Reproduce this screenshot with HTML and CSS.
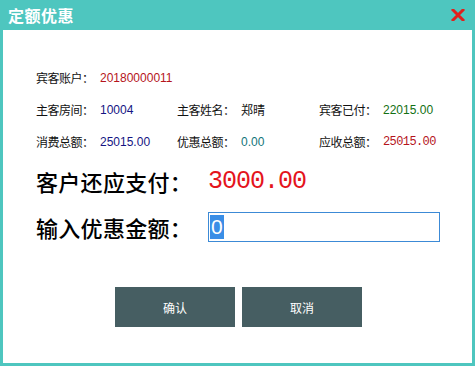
FILE: index.html
```html
<!DOCTYPE html>
<html lang="zh">
<head>
<meta charset="utf-8">
<link rel="stylesheet" href="styles.css">
</head>
<body>
<div class="window">
  <div class="titlebar">
    <span class="title">定额优惠</span>
    <span class="close">
      <svg width="14" height="12" viewBox="0 0 14 12"><path d="M2 1 L12 11 M12 1 L2 11" stroke="#e0201c" stroke-width="3" stroke-linecap="square"/></svg>
    </span>
  </div>
  <div class="content">
    <div class="info">
      <div class="cell"><span class="lbl">宾客账户：</span><span class="val red">20180000011</span></div>
      <div class="cell"></div>
      <div class="cell"></div>
      <div class="cell"><span class="lbl">主客房间：</span><span class="val navy">10004</span></div>
      <div class="cell"><span class="lbl">主客姓名：</span><span class="val black">郑晴</span></div>
      <div class="cell"><span class="lbl">宾客已付：</span><span class="val green">22015.00</span></div>
      <div class="cell"><span class="lbl">消费总额：</span><span class="val navy">25015.00</span></div>
      <div class="cell"><span class="lbl">优惠总额：</span><span class="val teal">0.00</span></div>
      <div class="cell"><span class="lbl">应收总额：</span><span class="val red mono">25015.00</span></div>
    </div>
    <div class="big-row">
      <span class="big-lbl">客户还应支付：</span><span class="big-val">3000.00</span>
    </div>
    <div class="big-row input-row">
      <span class="big-lbl">输入优惠金额：</span><span class="input"><span class="sel">0</span></span>
    </div>
    <div class="buttons">
      <button class="btn">确认</button>
      <button class="btn">取消</button>
    </div>
  </div>
</div>
</body>
</html>
```

FILE: styles.css
```css
* { box-sizing: border-box; }
html, body { margin: 0; padding: 0; }
body { width: 475px; height: 366px; overflow: hidden; font-family: "Noto Sans CJK SC", "Liberation Sans", sans-serif; }
.window {
  width: 475px; height: 366px;
  background: #4ec6bf;
  padding: 0 3px 3px 3px;
  display: flex; flex-direction: column;
}
.titlebar {
  height: 30px;
  display: flex; align-items: center; justify-content: space-between;
  padding: 0 7px 0 5px;
}
.title { color: #fff; font-size: 16px; font-weight: 700; letter-spacing: 0.5px; line-height: 1; }
.close { display: flex; align-items: center; margin-top: -1px; }
.content { flex: 1; background: #fff; padding: 32px 0 0 33px; }
.info {
  display: grid;
  grid-template-columns: 141px 142px auto;
  grid-auto-rows: 32px;
}
.cell { display: flex; align-items: center; font-size: 12px; line-height: 1; }
.lbl { color: #111; width: 64px; letter-spacing: -0.5px; }
.val { font-family: "Liberation Sans", sans-serif; font-size: 12px; }
.black { color: #111; font-family: "Noto Sans CJK SC", sans-serif; }
.red { color: #b5141c; }
.navy { color: #141483; }
.green { color: #137013; }
.teal { color: #137579; }
.mono { font-family: "Liberation Mono", monospace; letter-spacing: -0.6px; }
.big-row { display: flex; align-items: center; height: 46px; }
.big-lbl { font-size: 22px; color: #000; font-weight: 500; width: 172px; letter-spacing: 0.3px; }
.big-val { font-family: "Liberation Mono", monospace; font-size: 25px; color: #e4141c; letter-spacing: -1px; }
.input-row { margin-top: 0; }
.input {
  width: 232px; height: 30px;
  border: 1px solid #3c8ad6;
  display: flex; align-items: center;
  padding-left: 1px;
}
.sel { background: #3a8ee6; color: #fff; font-family: "Liberation Sans", sans-serif; font-size: 21px; line-height: 24px; padding: 0 1px; }
.buttons { display: flex; gap: 7px; margin-top: 37px; padding-left: 79px; }
.btn {
  width: 120px; height: 40px;
  background: #465e62; color: #fff; border: none;
  font-family: "Noto Sans CJK SC", sans-serif; font-size: 12px;
}
```
